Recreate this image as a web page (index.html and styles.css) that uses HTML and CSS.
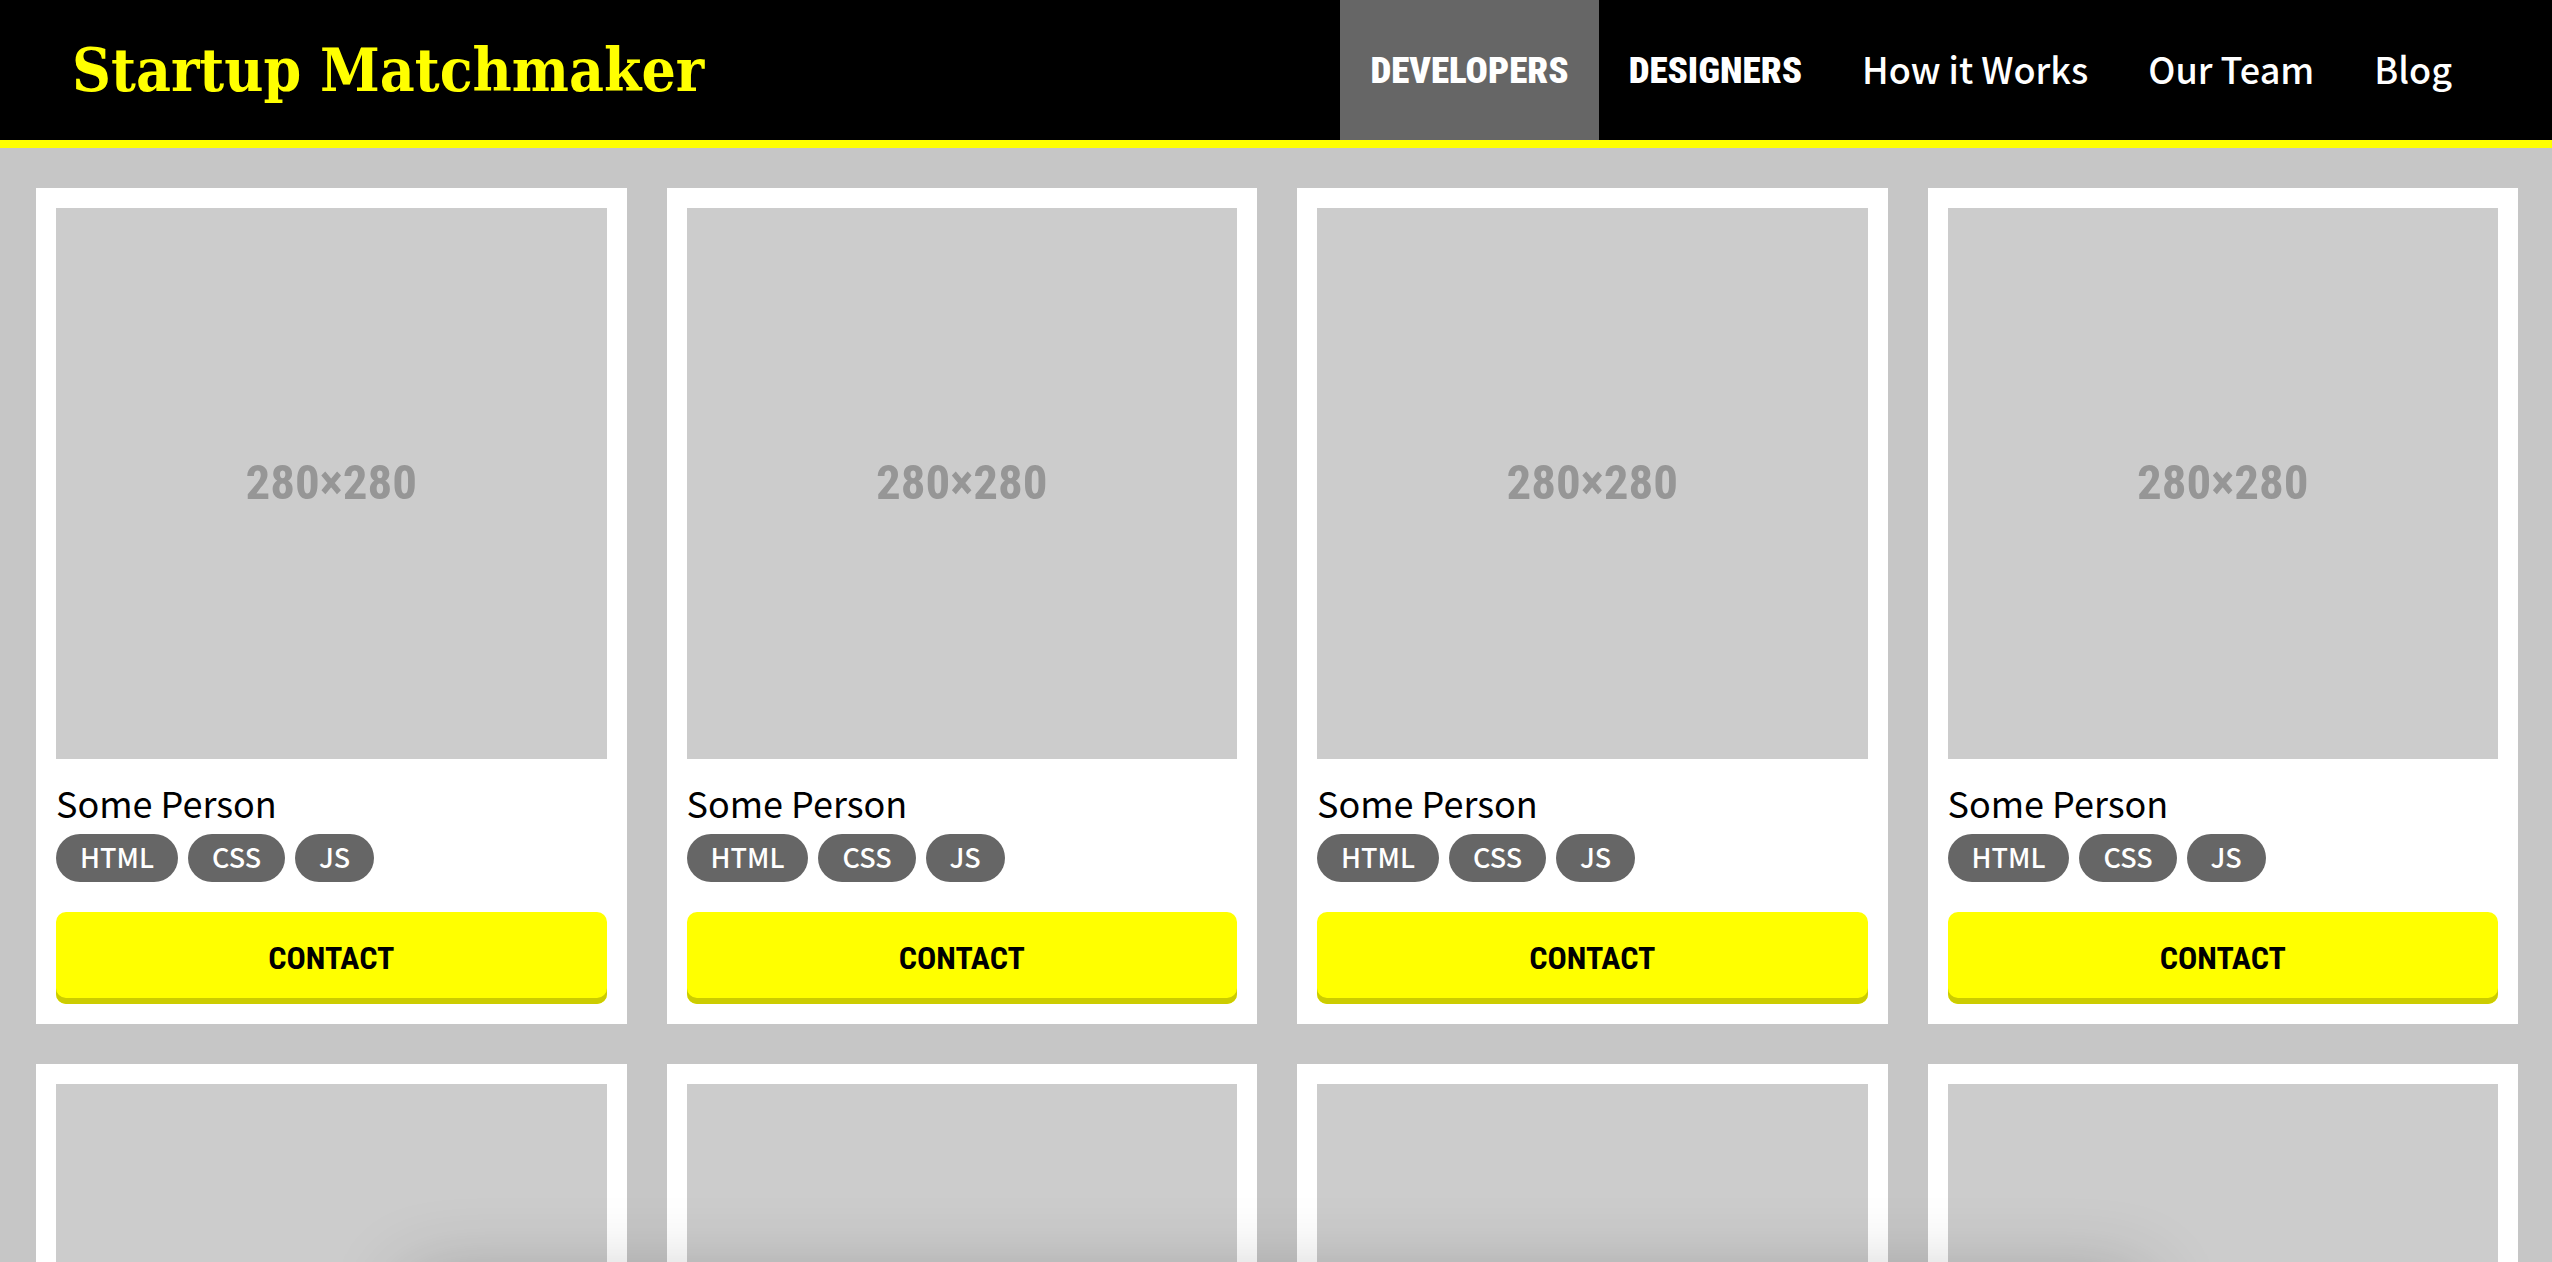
FILE: index.html
```html
<!DOCTYPE html>
<html lang="en">
<head>
<meta charset="utf-8">
<meta name="viewport" content="width=device-width, initial-scale=1">
<title>Startup Matchmaker</title>
<link rel="stylesheet" href="styles.css">
</head>
<body>
<header class="site-header">
  <h1 class="site-title">Startup Matchmaker</h1>
  <nav class="site-nav">
    <a class="nav-link nav-link-primary is-active" href="#developers">DEVELOPERS</a>
    <a class="nav-link nav-link-primary" href="#designers">DESIGNERS</a>
    <a class="nav-link" href="#how">How it Works</a>
    <a class="nav-link" href="#team">Our Team</a>
    <a class="nav-link" href="#blog">Blog</a>
  </nav>
</header>
<main class="people">
  <article class="card">
    <div class="photo">280×280</div>
    <h2 class="name">Some Person</h2>
    <ul class="tags"><li class="tag">HTML</li><li class="tag">CSS</li><li class="tag">JS</li></ul>
    <button class="contact" type="button">CONTACT</button>
  </article>
  <article class="card">
    <div class="photo">280×280</div>
    <h2 class="name">Some Person</h2>
    <ul class="tags"><li class="tag">HTML</li><li class="tag">CSS</li><li class="tag">JS</li></ul>
    <button class="contact" type="button">CONTACT</button>
  </article>
  <article class="card">
    <div class="photo">280×280</div>
    <h2 class="name">Some Person</h2>
    <ul class="tags"><li class="tag">HTML</li><li class="tag">CSS</li><li class="tag">JS</li></ul>
    <button class="contact" type="button">CONTACT</button>
  </article>
  <article class="card">
    <div class="photo">280×280</div>
    <h2 class="name">Some Person</h2>
    <ul class="tags"><li class="tag">HTML</li><li class="tag">CSS</li><li class="tag">JS</li></ul>
    <button class="contact" type="button">CONTACT</button>
  </article>
  <article class="card"><div class="photo"></div></article>
  <article class="card"><div class="photo"></div></article>
  <article class="card"><div class="photo"></div></article>
  <article class="card"><div class="photo"></div></article>
</main>
<div class="bottom-shade"></div>
</body>
</html>
```
FILE: styles.css
```css
* {
  box-sizing: border-box;
}

body {
  margin: 0;
  background: #c6c6c6;
  color: #000;
  font-family: "Noto Sans CJK SC", "Open Sans", sans-serif;
}

.site-header {
  display: flex;
  justify-content: space-between;
  align-items: stretch;
  min-height: 148px;
  padding: 0 70px 0 72px;
  background: #000;
  border-bottom: 8px solid #ff0;
}

.site-title {
  align-self: center;
  margin: 0;
  color: #ff0;
  font: bold 60px/80px "DejaVu Serif Condensed", "DejaVu Serif", serif;
  white-space: nowrap;
}

.site-nav {
  display: flex;
}

.nav-link {
  display: flex;
  align-items: center;
  padding: 0 30px 4px;
  color: #fff;
  font-size: 36px;
  font-weight: 500;
  text-decoration: none;
  white-space: nowrap;
}

.nav-link-primary {
  padding-bottom: 0;
  font-family: "Roboto Condensed", "Open Sans Condensed", "Roboto", sans-serif;
  font-size: 37px;
  font-weight: 900;
}

.is-active {
  background: #666;
}

.people {
  display: grid;
  grid-template-columns: repeat(4, minmax(0, 1fr));
  gap: 40px;
  padding: 40px 34px 40px 36px;
}

.card {
  padding: 20px;
  background: #fff;
}

.photo {
  display: flex;
  align-items: center;
  justify-content: center;
  aspect-ratio: 1;
  background: #ccc;
  color: #969696;
  font: bold 49px/64px "Roboto Condensed", "Open Sans Condensed", "Roboto", sans-serif;
}

.name {
  margin: 19px 0 8px;
  font-size: 36px;
  font-weight: 400;
  line-height: 48px;
}

.tags {
  display: flex;
  gap: 10px;
  margin: 0 0 30px;
  padding: 0;
  list-style: none;
}

.tag {
  height: 48px;
  padding: 0 24px;
  border-radius: 24px;
  background: #666;
  color: #fff;
  font-size: 27px;
  font-weight: 500;
  line-height: 46px;
}

.contact {
  display: block;
  width: 100%;
  height: 92px;
  padding: 0;
  border: 0;
  border-radius: 10px;
  background: #ff0;
  box-shadow: inset 0 -6px #cc0;
  color: #000;
  font: bold 32px/92px "Roboto Condensed", "Open Sans Condensed", "Roboto", sans-serif;
}

.bottom-shade {
  position: fixed;
  top: 100%;
  left: 16%;
  right: 16%;
  height: 200px;
  box-shadow: 0 16px 80px rgba(0, 0, 0, 0.24);
}
```
